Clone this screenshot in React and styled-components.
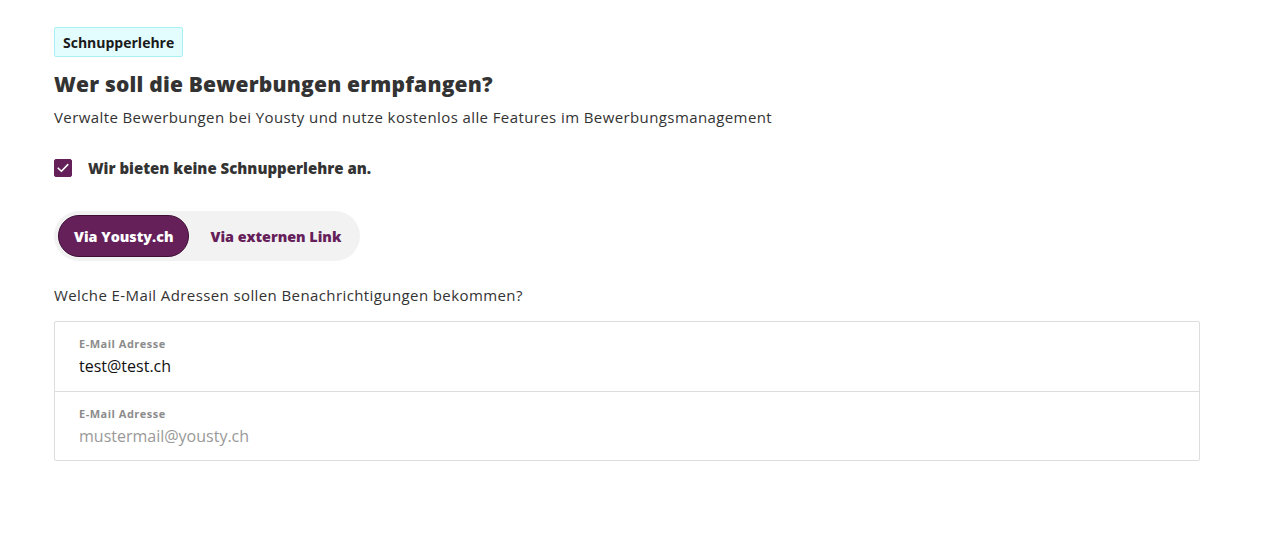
import { useState } from 'react';
import styled, { createGlobalStyle } from 'styled-components';

const GlobalStyle = createGlobalStyle`
    body {
        margin: 0;
        background: #ffffff;
        font-family: 'Open Sans', Lato, sans-serif;
        color: #333333;
    }
`;

const emails = [
    { value: 'test@test.ch', placeholder: 'mustermail@yousty.ch' },
    { value: '', placeholder: 'mustermail@yousty.ch' },
];

const App = () => {
    const [checked, setChecked] = useState(true);
    const [mode, setMode] = useState('yousty');

    return (
        <>
            <GlobalStyle />
            <Page>
                <Badge>Schnupperlehre</Badge>
                <Title>Wer soll die Bewerbungen ermpfangen?</Title>
                <Subtitle>
                    Verwalte Bewerbungen bei Yousty und nutze kostenlos alle Features im Bewerbungsmanagement
                </Subtitle>

                <CheckRow onClick={() => setChecked(!checked)}>
                    <CheckBox $checked={checked}>
                        {checked && (
                            <svg width='12' height='10' viewBox='0 0 12 10' fill='none'>
                                <path
                                    d='M1.2 5.2L4.4 8.3L10.8 1.6'
                                    stroke='#fff'
                                    strokeWidth='1.6'
                                    strokeLinecap='round'
                                    strokeLinejoin='round'
                                />
                            </svg>
                        )}
                    </CheckBox>
                    <CheckLabel>Wir bieten keine Schnupperlehre an.</CheckLabel>
                </CheckRow>

                <Toggle>
                    <ToggleButton $active={mode === 'yousty'} onClick={() => setMode('yousty')}>
                        Via Yousty.ch
                    </ToggleButton>
                    <ToggleButton $active={mode === 'link'} onClick={() => setMode('link')}>
                        Via externen Link
                    </ToggleButton>
                </Toggle>

                <Question>Welche E-Mail Adressen sollen Benachrichtigungen bekommen?</Question>

                <InputGroup>
                    {emails.map((item, i) => (
                        <Field key={i}>
                            <FieldLabel>E-Mail Adresse</FieldLabel>
                            <FieldInput defaultValue={item.value} placeholder={item.placeholder} />
                        </Field>
                    ))}
                </InputGroup>
            </Page>
        </>
    );
};

const Page = styled.div`
    padding: 27px 85px 0 54px;
    display: flex;
    flex-direction: column;
    align-items: flex-start;
`;

const Badge = styled.span`
    display: inline-flex;
    align-items: center;
    height: 30px;
    box-sizing: border-box;
    padding: 0 8px;
    background: #e3fcfd;
    border: 1px solid #a9f0f4;
    border-radius: 2px;
    font-size: 14px;
    font-weight: 700;
    color: #1a1a1a;
`;

const Title = styled.h1`
    margin: 13px 0 0;
    font-size: 21px;
    line-height: 28px;
    font-weight: 800;
    letter-spacing: 0.2px;
    color: #333333;
`;

const Subtitle = styled.p`
    margin: 9px 0 0;
    font-size: 15px;
    line-height: 20px;
    letter-spacing: 0.4px;
    color: #333333;
`;

const CheckRow = styled.label`
    display: flex;
    align-items: center;
    gap: 16px;
    margin-top: 31px;
    cursor: pointer;
`;

const CheckBox = styled.span`
    width: 18px;
    height: 18px;
    border-radius: 2px;
    display: flex;
    align-items: center;
    justify-content: center;
    box-sizing: border-box;
    background: ${(props) => (props.$checked ? '#65205a' : '#fff')};
    border: 1px solid ${(props) => (props.$checked ? '#65205a' : '#999')};
`;

const CheckLabel = styled.span`
    font-size: 15px;
    font-weight: 800;
    color: #333333;
`;

const Toggle = styled.div`
    display: flex;
    align-items: center;
    margin-top: 33px;
    padding: 4px;
    width: 306px;
    height: 50px;
    box-sizing: border-box;
    background: #f2f2f2;
    border-radius: 25px;
`;

const ToggleButton = styled.button`
    height: 42px;
    padding: 0 ${(props) => (props.$active ? '15px' : '20px')};
    border-radius: 21px;
    border: 1px solid ${(props) => (props.$active ? '#3e0f36' : 'transparent')};
    background: ${(props) => (props.$active ? '#65205a' : 'transparent')};
    color: ${(props) => (props.$active ? '#ffffff' : '#65205a')};
    font-family: 'Open Sans', Lato, sans-serif;
    font-size: 14.3px;
    font-weight: 800;
    cursor: pointer;
    white-space: nowrap;
`;

const Question = styled.p`
    margin: 24px 0 0;
    font-size: 15px;
    line-height: 20px;
    letter-spacing: 0.4px;
    color: #333333;
`;

const InputGroup = styled.div`
    margin-top: 16px;
    align-self: stretch;
    border: 1px solid #dddddd;
    border-radius: 2px;
    display: flex;
    flex-direction: column;
`;

const Field = styled.div`
    height: 69px;
    box-sizing: border-box;
    padding: 15px 24px 0;
    display: flex;
    flex-direction: column;

    & + & {
        border-top: 1px solid #dddddd;
    }
`;

const FieldLabel = styled.span`
    font-size: 11px;
    line-height: 14px;
    font-weight: 700;
    letter-spacing: 0.5px;
    color: #8c8c8c;
`;

const FieldInput = styled.input`
    margin-top: 4px;
    border: none;
    outline: none;
    padding: 0;
    font-family: 'Open Sans', Lato, sans-serif;
    font-size: 16px;
    line-height: 22px;
    color: #111111;
    background: transparent;

    &::placeholder {
        color: #999999;
    }
`;

export default App;
